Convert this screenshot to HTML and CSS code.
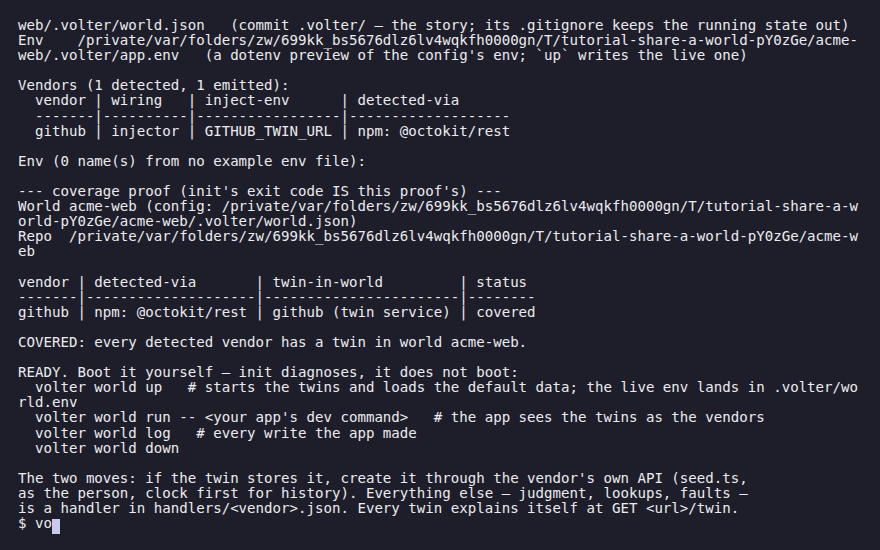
FILE: index.html
```html
<!DOCTYPE html>
<html lang="en">
<head>
<meta charset="utf-8">
<title>Terminal</title>
<link rel="stylesheet" href="styles.css">
</head>
<body>
<main class="terminal">
<pre class="output">web/.volter/world.json   (commit .volter/ — the story; its .gitignore keeps the running state out)
Env    /private/var/folders/zw/699kk_bs5676dlz6lv4wqkfh0000gn/T/tutorial-share-a-world-pY0zGe/acme-
web/.volter/app.env   (a dotenv preview of the config's env; `up` writes the live one)

Vendors (1 detected, 1 emitted):
  vendor | wiring   | inject-env      | detected-via
  -------|----------|-----------------|-------------------
  github | injector | GITHUB_TWIN_URL | npm: @octokit/rest

Env (0 name(s) from no example env file):

--- coverage proof (init's exit code IS this proof's) ---
World acme-web (config: /private/var/folders/zw/699kk_bs5676dlz6lv4wqkfh0000gn/T/tutorial-share-a-w
orld-pY0zGe/acme-web/.volter/world.json)
Repo  /private/var/folders/zw/699kk_bs5676dlz6lv4wqkfh0000gn/T/tutorial-share-a-world-pY0zGe/acme-w
eb

vendor | detected-via       | twin-in-world         | status
-------|--------------------|-----------------------|--------
github | npm: @octokit/rest | github (twin service) | covered

COVERED: every detected vendor has a twin in world acme-web.

READY. Boot it yourself — init diagnoses, it does not boot:
  volter world up   # starts the twins and loads the default data; the live env lands in .volter/wo
rld.env
  volter world run -- &lt;your app's dev command&gt;   # the app sees the twins as the vendors
  volter world log   # every write the app made
  volter world down

The two moves: if the twin stores it, create it through the vendor's own API (seed.ts,
as the person, clock first for history). Everything else — judgment, lookups, faults —
is a handler in handlers/&lt;vendor&gt;.json. Every twin explains itself at GET &lt;url&gt;/twin.
$ vo<span class="cursor"> </span></pre>
</main>
</body>
</html>
```
FILE: styles.css
```css
html, body {
  margin: 0;
  padding: 0;
  background: #1e1e2a;
}
.terminal {
  width: 880px;
  height: 550px;
  overflow: hidden;
  background: #1e1e2a;
  padding: 18px 0 0 18px;
  box-sizing: border-box;
}
.output {
  margin: 0;
  font-family: "DejaVu Sans Mono", "Liberation Mono", monospace;
  font-size: 14.1px;
  line-height: 15.1px;
  color: #ececf0;
  white-space: pre;
}
.cursor {
  display: inline-block;
  width: 8.5px;
  height: 15px;
  vertical-align: -3px;
  background: #c9c9ee;
}
```
